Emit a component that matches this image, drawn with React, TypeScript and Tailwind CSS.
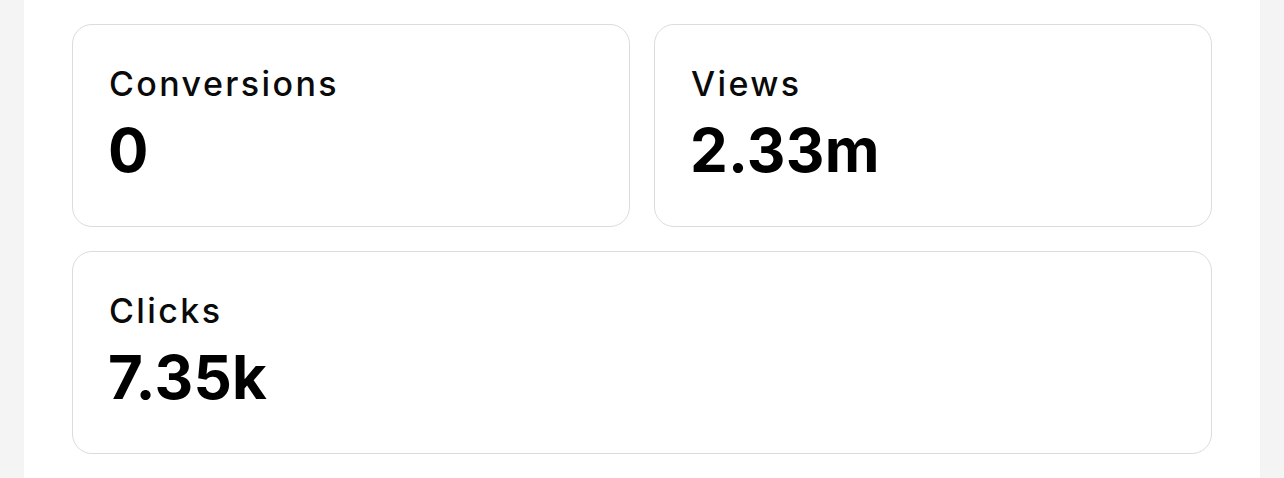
import React from "react";

function Card({ label, value, className = "" }: { label: string; value: string; className?: string }) {
  return (
    <div className={"h-[203px] rounded-[20px] border border-[#dcdcdc] bg-white pl-[36px] pt-[39px] " + className}>
      <div className="text-[34px] leading-[40px] font-medium text-[#0a0a0a] tracking-[2.4px]">{label}</div>
      <div className="mt-[16px] -ml-[1px] text-[60px] leading-[60px] font-bold text-black tracking-[0.2px]">{value}</div>
    </div>
  );
}

export default function App() {
  return (
    <div className="min-h-[478px] w-full bg-[#f4f4f4] px-[24px]" style={{ fontFamily: "Inter, 'Noto Sans', sans-serif" }}>
      <div className="min-h-[478px] bg-white px-[48px] pt-[24px]">
        <div className="grid grid-cols-2 gap-x-[24px] gap-y-[24px]">
          <Card label="Conversions" value="0" />
          <Card label="Views" value="2.33m" />
          <Card label="Clicks" value="7.35k" className="col-span-2" />
        </div>
      </div>
    </div>
  );
}
